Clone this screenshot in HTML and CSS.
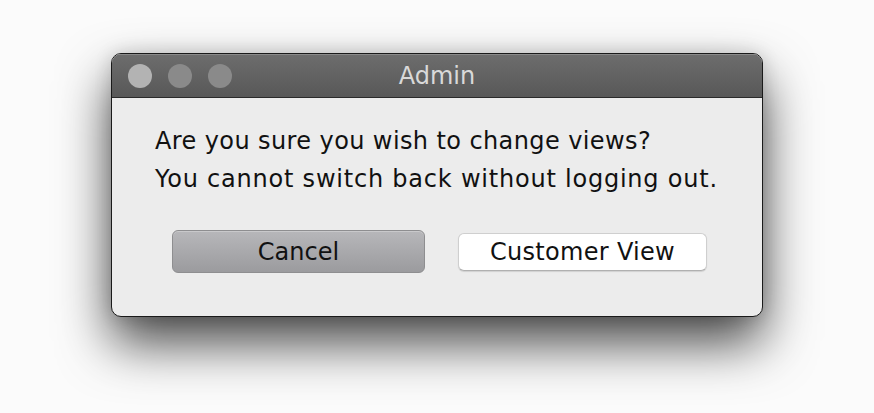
FILE: index.html
```html
<!DOCTYPE html>
<html lang="en">
<head>
<meta charset="utf-8">
<title>Admin</title>
<link rel="stylesheet" href="styles.css">
</head>
<body>
<div class="stage">
  <div class="window">
    <div class="titlebar">
      <div class="lights">
        <span class="light light-close"></span>
        <span class="light"></span>
        <span class="light"></span>
      </div>
      <div class="title">Admin</div>
    </div>
    <div class="content">
      <p class="message"><span class="line line-1">Are you sure you wish to change views?</span><span class="line line-2">You cannot switch back without logging out.</span></p>
      <div class="buttons">
        <button class="btn btn-cancel">Cancel</button>
        <button class="btn btn-default">Customer View</button>
      </div>
    </div>
  </div>
</div>
</body>
</html>
```

FILE: styles.css
```css
html, body {
  margin: 0;
  padding: 0;
  background: #fbfbfb;
  width: 874px;
  height: 413px;
  overflow: hidden;
}
.stage {
  padding: 53px 0 0 111px;
  font-family: "DejaVu Sans", "Liberation Sans", sans-serif;
}
.window {
  width: 650px;
  height: 262px;
  border: 1px solid #1a1a1a;
  border-radius: 10px;
  background: #ececec;
  overflow: hidden;
  box-shadow: 0 26px 52px rgba(0, 0, 0, 0.72), 0 0 18px rgba(0,0,0,0.14);
  display: flex;
  flex-direction: column;
}
.titlebar {
  height: 43px;
  flex: none;
  border-bottom: 1px solid #2a2a2a;
  background: linear-gradient(#6d6d6d, #585858);
  box-shadow: inset 0 1px 0 #8a8a8a;
  display: flex;
  align-items: center;
  position: relative;
}
.lights {
  display: flex;
  gap: 16px;
  padding-left: 16px;
}
.light {
  width: 24px;
  height: 24px;
  border-radius: 50%;
  background: #8a8a8a;
}
.light-close {
  background: #b3b3b3;
}
.title {
  position: absolute;
  left: 0;
  right: 0;
  top: 0;
  bottom: 0;
  display: flex;
  align-items: center;
  justify-content: center;
  color: #d9d9d9;
  font-size: 24px;
  padding-top: 1px;
}
.content {
  padding: 24px 0 0 43px;
}
.message {
  margin: 0;
  font-size: 24px;
  line-height: 38px;
  color: #111;
}
.line {
  display: block;
  white-space: nowrap;
}
.line-1 {
  letter-spacing: 0.4px;
}
.line-2 {
  letter-spacing: 0.78px;
}
.buttons {
  display: flex;
  align-items: center;
  margin-top: 32px;
  padding-left: 17px;
  gap: 33px;
}
.btn {
  font-family: "DejaVu Sans", "Liberation Sans", sans-serif;
  font-size: 24px;
  color: #111;
  padding: 0;
  margin: 0;
  border-radius: 6px;
}
.btn-cancel {
  width: 253px;
  height: 43px;
  border: 1px solid #8e8e90;
  background: linear-gradient(#b7b7ba, #9b9b9e);
  box-shadow: inset 0 1px 0 rgba(255,255,255,0.25);
}
.btn-default {
  width: 249px;
  height: 38px;
  border: 1px solid #cfcfcf;
  border-bottom-color: #b0b0b0;
  background: #ffffff;
  box-shadow: 0 1px 1px rgba(0,0,0,0.12);
  letter-spacing: 0.3px;
}
```
